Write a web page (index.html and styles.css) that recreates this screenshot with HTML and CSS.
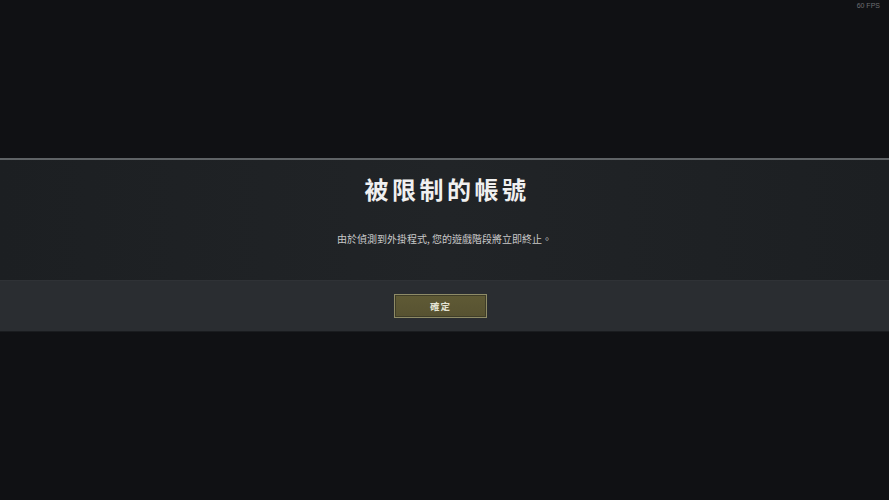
FILE: index.html
```html
<!DOCTYPE html>
<html>
   <head>
      <meta charset="UTF-8">
      <title>被限制的帳號</title>
      <link rel="stylesheet" href="styles.css">
   </head>
   <body>
      <div class="fps">60 FPS</div>
      <div class="overlay">
         <div class="dialog">
            <div class="dialog-top">
               <h1 class="dialog-title">被限制的帳號</h1>
               <p class="dialog-text">由於偵測到外掛程式, 您的遊戲階段將立即終止。</p>
            </div>
            <div class="dialog-bottom">
               <button class="confirm-button">確定</button>
            </div>
         </div>
      </div>
   </body>
</html>
```

FILE: styles.css
```css
body {
   margin: 0;
   width: 889px;
   height: 500px;
   background-color: #101114;
   font-family: "Noto Sans CJK TC", "Noto Sans", sans-serif;
   overflow: hidden;
   position: relative;
}
.fps {
   position: absolute;
   top: 2px;
   right: 9px;
   font-family: "Liberation Sans", sans-serif;
   font-size: 7px;
   color: #6d6f73;
}
.overlay {
   padding-top: 158px;
}
.dialog {
   border-top: 2px solid #5f6366;
   border-bottom: 1px solid #1a1c1f;
}
.dialog-top {
   height: 120px;
   background: linear-gradient(to right, #1c1f22, #212427 50%, #1c1f22);
   display: flex;
   flex-direction: column;
   align-items: center;
   border-bottom: 1px solid #2f3236;
}
.dialog-title {
   margin: 10px 0 0 5px;
   font-size: 24px;
   font-weight: bold;
   letter-spacing: 3.5px;
   color: #f0f0f0;
   line-height: 38px;
}
.dialog-text {
   margin: 23px 0 0 0;
   font-size: 10px;
   color: #c9c9c9;
   letter-spacing: 0;
}
.dialog-bottom {
   height: 50px;
   background-color: #2a2d31;
   display: flex;
   justify-content: center;
   align-items: center;
}
.confirm-button {
   width: 93px;
   height: 24px;
   margin-right: 8px;
   background: linear-gradient(to bottom, #5f5a35, #575231);
   border: 1px solid #8e8b67;
   box-shadow: inset 0 0 0 1px #3f3d28;
   color: #e4e3d4;
   font-family: "Noto Sans CJK TC", sans-serif;
   font-size: 9.5px;
   font-weight: bold;
   letter-spacing: 1px;
   border-radius: 0;
   padding: 0;
}
```
